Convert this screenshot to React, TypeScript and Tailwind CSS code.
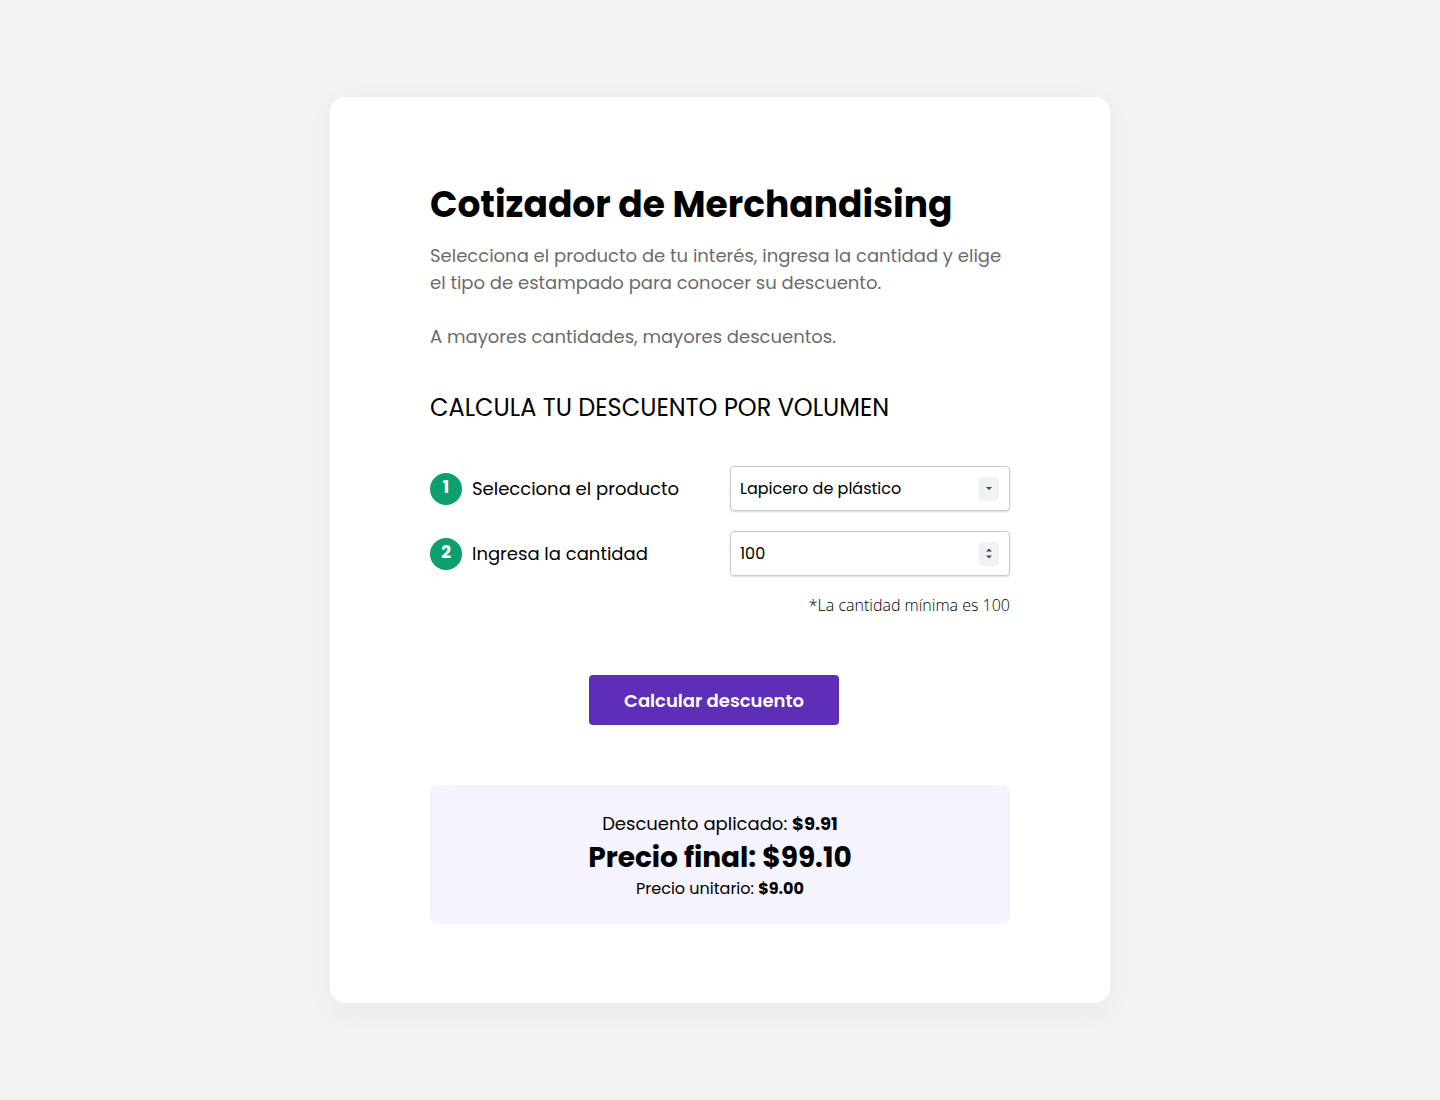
import React from 'react';

const font = { fontFamily: 'Poppins, Inter, "Noto Sans", sans-serif' };

const Step = ({ n, label }: { n: number; label: string }) => (
  <div className="flex items-center gap-[10px]">
    <span className="flex h-8 w-8 items-center justify-center rounded-full bg-[#0e9f6e] pb-[2px] text-[17px] font-bold text-white">
      {n}
    </span>
    <span className="text-[18px] text-black">{label}</span>
  </div>
);

const App = () => {
  return (
    <div className="min-h-[1100px] w-full bg-[#f2f2f2] pt-[97px]" style={font}>
      <div className="mx-auto w-[780px] rounded-2xl bg-white px-[100px] pt-[86px] pb-[79px] shadow-[0_8px_30px_rgba(0,0,0,0.04)]">
        <h1 className="text-[36px] leading-[44px] font-bold text-black">
          Cotizador de Merchandising
        </h1>
        <p className="mt-[15px] text-[18px] leading-[27px] text-[#6b6b6b]">
          Selecciona el producto de tu interés, ingresa la cantidad y elige el
          tipo de estampado para conocer su descuento.
        </p>
        <p className="mt-[27px] text-[18px] leading-[27px] text-[#6b6b6b]">
          A mayores cantidades, mayores descuentos.
        </p>

        <h2 className="mt-[42px] text-[24px] leading-[32px] text-black uppercase">
          Calcula tu descuento por volumen
        </h2>

        <div className="mt-[42px] flex flex-col gap-5">
          <div className="flex items-center justify-between">
            <Step n={1} label="Selecciona el producto" />
            <div className="flex h-[45px] w-[280px] items-center justify-between rounded border border-[#c9c9c9] pr-[10px] pl-[9px] shadow-[0_1px_2px_rgba(0,0,0,0.15)]">
              <span className="text-[16px] text-black">Lapicero de plástico</span>
              <span className="flex h-[24px] w-[20px] items-center justify-center rounded-sm bg-[#f1f2f4]">
                <svg width="8" height="5" viewBox="0 0 8 5">
                  <path d="M1 1h6L4 4z" fill="#3f4656" />
                </svg>
              </span>
            </div>
          </div>
          <div className="flex items-center justify-between">
            <Step n={2} label="Ingresa la cantidad" />
            <div className="flex h-[45px] w-[280px] items-center justify-between rounded border border-[#c9c9c9] pr-[10px] pl-[9px] shadow-[0_1px_2px_rgba(0,0,0,0.15)]">
              <span className="text-[16px] text-black">100</span>
              <span className="flex h-[24px] w-[20px] flex-col items-center justify-center gap-[3px] rounded-sm bg-[#f1f2f4]">
                <svg width="8" height="4" viewBox="0 0 8 4">
                  <path d="M1 3.5h6L4 0.5z" fill="#3f4656" />
                </svg>
                <svg width="8" height="4" viewBox="0 0 8 4">
                  <path d="M1 0.5h6L4 3.5z" fill="#3f4656" />
                </svg>
              </span>
            </div>
          </div>
        </div>
        <p
          className="mt-[17px] text-right text-[16px] leading-[24px] font-light text-black"
          style={{ fontFamily: '"Open Sans", "Noto Sans", sans-serif' }}
        >
          *La cantidad mínima es 100
        </p>

        <div className="mt-[58px] flex justify-center pr-3">
          <button className="h-[50px] w-[250px] rounded bg-[#5f2eb8] text-[18px] font-semibold text-white">
            Calcular descuento
          </button>
        </div>

        <div className="mt-[60px] flex flex-col items-center rounded-lg bg-[#f5f3fd] pt-[27px] pb-[24px] text-black">
          <p className="text-[18px] leading-[24px]">
            Descuento aplicado: <strong className="font-bold">$9.91</strong>
          </p>
          <p className="mt-[5px] text-[28px] leading-[34px] font-bold">
            Precio final: $99.10
          </p>
          <p className="mt-[3px] text-[16px] leading-[22px]">
            Precio unitario: <strong className="font-bold">$9.00</strong>
          </p>
        </div>
      </div>
    </div>
  );
};

export default App;
